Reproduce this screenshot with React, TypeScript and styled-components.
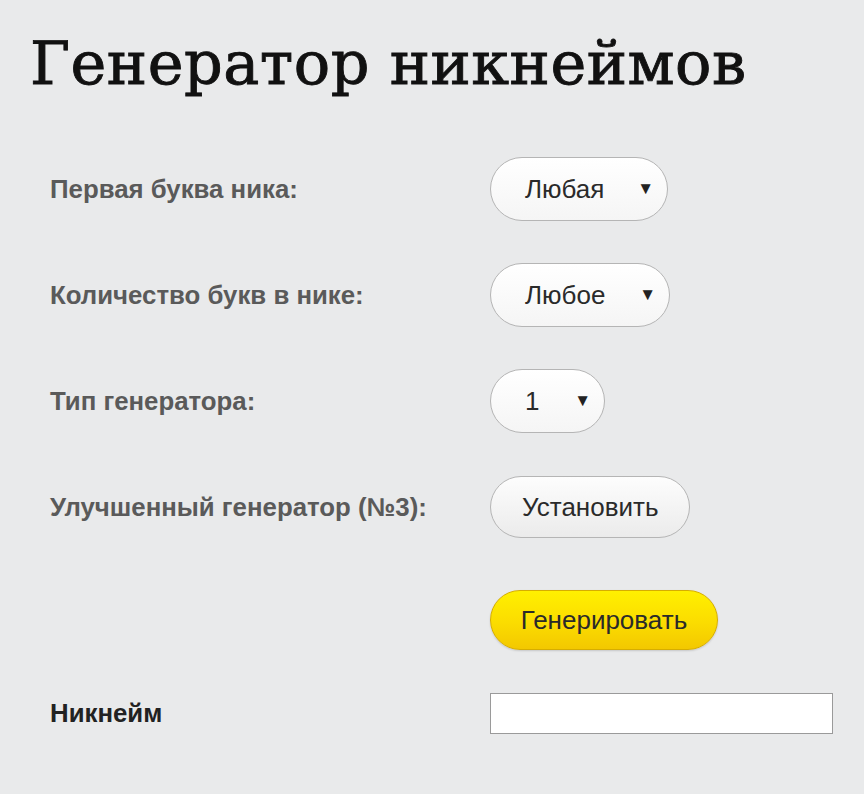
import React from 'react'
import styled, { createGlobalStyle } from 'styled-components'

const GlobalStyle = createGlobalStyle`
    html, body {
        margin: 0;
        padding: 0;
        background: #e9eaeb;
    }
    body {
        font-family: "Liberation Sans", Arial, sans-serif;
    }
`

const Page = styled.div`
    width: 864px;
    height: 794px;
    padding: 21px 0 0 30px;
    box-sizing: border-box;
`

const Title = styled.h1`
    margin: 0 0 31px 0;
    font-family: "DejaVu Serif", "Liberation Serif", serif;
    font-weight: normal;
    font-size: 60.5px;
    line-height: 84px;
    color: #111;
    letter-spacing: 0.5px;
    -webkit-text-stroke: 0.9px #111;
`

const Form = styled.div`
    display: grid;
    grid-template-columns: 440px auto;
    grid-template-rows: 106px 106px 106px 106px 120px 66px;
    align-items: center;
    padding-left: 20px;
`

const Label = styled.div<{ dark?: boolean }>`
    font-size: 25.8px;
    font-weight: bold;
    color: ${p => (p.dark ? '#222' : '#5a5a5a')};
`

const Cell = styled.div`
    display: flex;
    align-items: center;
`

const Pill = styled.div<{ width: number }>`
    width: ${p => p.width}px;
    height: 64px;
    box-sizing: border-box;
    border: 1px solid #b5b5b5;
    border-radius: 32px;
    background: linear-gradient(#ffffff, #f5f5f5);
    display: flex;
    align-items: center;
    justify-content: space-between;
    padding: 0 13px 0 34px;
    font-size: 26px;
    color: #2a2a2a;
`

const Arrow = styled.span`
    font-size: 17px;
    color: #222;
`

const Button = styled.div`
    height: 62px;
    box-sizing: border-box;
    padding: 0 31px;
    border: 1px solid #b5b5b5;
    border-radius: 31px;
    background: linear-gradient(#fdfdfd, #ebebeb);
    display: flex;
    align-items: center;
    font-size: 26px;
    color: #2a2a2a;
`

const YellowButton = styled(Button)`
    width: 228px;
    height: 60px;
    justify-content: center;
    padding: 0;
    border: 1px solid #d6ad00;
    background: linear-gradient(#fff000, #fbdc00 55%, #f3c800);
    box-shadow: 0 1px 2px rgba(0, 0, 0, 0.15);
`

const Output = styled.div`
    width: 343px;
    height: 41px;
    box-sizing: border-box;
    background: #fff;
    border: 1px solid #9a9a9a;
`

const Select = ({ value, width }: { value: string; width: number }) => (
    <Pill width={width}>
        <span>{value}</span>
        <Arrow>▼</Arrow>
    </Pill>
)

const App = () => (
    <Page>
        <GlobalStyle />
        <Title>Генератор никнеймов</Title>
        <Form>
            <Label>Первая буква ника:</Label>
            <Cell><Select value="Любая" width={178} /></Cell>
            <Label>Количество букв в нике:</Label>
            <Cell><Select value="Любое" width={180} /></Cell>
            <Label>Тип генератора:</Label>
            <Cell><Select value="1" width={115} /></Cell>
            <Label>Улучшенный генератор (№3):</Label>
            <Cell><Button>Установить</Button></Cell>
            <div />
            <Cell><YellowButton>Генерировать</YellowButton></Cell>
            <Label dark>Никнейм</Label>
            <Cell><Output /></Cell>
        </Form>
    </Page>
)

export default App
